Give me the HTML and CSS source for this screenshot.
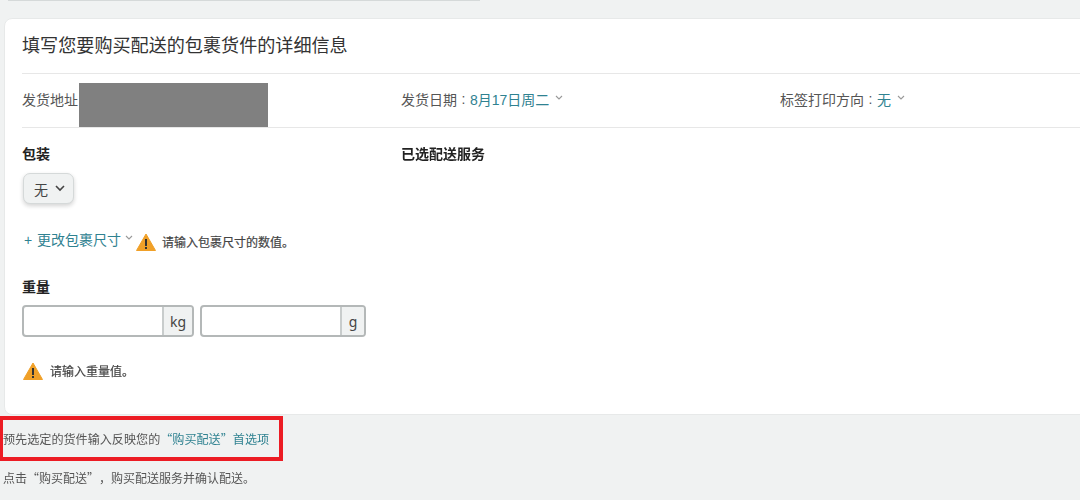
FILE: index.html
```html
<!DOCTYPE html>
<html lang="zh-CN">
<head>
<meta charset="utf-8">
<title>购买配送</title>
<link rel="stylesheet" href="styles.css">
</head>
<body>
<div class="top-strip"></div>
<main class="card">
  <h1 class="title">填写您要购买配送的包裹货件的详细信息</h1>
  <div class="meta">
    <div class="meta-cell">发货地址<span class="redacted"></span></div>
    <div class="meta-cell">发货日期<span class="colon">:</span><a class="link">8月17日周二</a><svg class="chev" viewBox="0 0 8 5"><path d="M1 1l3 3 3-3"/></svg></div>
    <div class="meta-cell">标签打印方向<span class="colon">:</span><a class="link">无</a><svg class="chev" viewBox="0 0 8 5"><path d="M1 1l3 3 3-3"/></svg></div>
  </div>
  <div class="body">
    <section class="left">
      <h2 class="label">包装</h2>
      <button class="select">无<svg class="select-chev" viewBox="0 0 10 7"><path d="M1 1l4 4 4-4"/></svg></button>
      <div class="dims">
        <a class="link dims-link">+ 更改包裹尺寸</a><svg class="chev dims-chev" viewBox="0 0 8 5"><path d="M1 1l3 3 3-3"/></svg>
        <svg class="warn" viewBox="0 0 20 18"><path class="warn-bg" d="M10 1L19.5 17.5H.5z"/><rect class="warn-mark" x="9" y="6" width="2" height="7"/><rect class="warn-mark" x="9" y="14" width="2" height="2"/></svg>
        <span class="warn-text">请输入包裹尺寸的数值。</span>
      </div>
      <h2 class="label weight-label">重量</h2>
      <div class="weights">
        <div class="field field-kg"><input class="input" type="text"><span class="unit">kg</span></div>
        <div class="field field-g"><input class="input" type="text"><span class="unit">g</span></div>
      </div>
      <div class="weight-warn">
        <svg class="warn" viewBox="0 0 20 18"><path class="warn-bg" d="M10 1L19.5 17.5H.5z"/><rect class="warn-mark" x="9" y="6" width="2" height="7"/><rect class="warn-mark" x="9" y="14" width="2" height="2"/></svg>
        <span class="warn-text">请输入重量值。</span>
      </div>
    </section>
    <section class="right">
      <h2 class="label">已选配送服务</h2>
    </section>
  </div>
</main>
<p class="note-box">预先选定的货件输入反映您的<a class="link">“购买配送”首选项</a></p>
<p class="note">点击“购买配送”，购买配送服务并确认配送。</p>
</body>
</html>
```

FILE: styles.css
```css
* { box-sizing: border-box; }
html, body { margin: 0; height: 100%; overflow: hidden; }
body {
  background: #f0f2f2;
  color: #333;
  font-family: "Liberation Sans", "Noto Sans CJK SC", sans-serif;
  font-size: 14px;
  width: 1080px;
  filter: blur(.35px);
}
.top-strip { width: 472px; height: 1px; background: #d5d9d9; margin-left: 8px; }
.card {
  width: 1120px;
  height: 397px;
  margin: 17px 0 0 4px;
  padding: 0 0 0 17px;
  background: #fff;
  border: 1px solid #e7e9e9;
  border-radius: 8px;
}
.title {
  margin: 0;
  height: 55px;
  font-size: 18.1px;
  font-weight: 400;
  line-height: 54px;
  color: #333;
  border-bottom: 1px solid #e7e7e7;
}
.meta {
  display: grid;
  grid-template-columns: 379px 379px 1fr;
  height: 54px;
  border-bottom: 1px solid #e7e7e7;
  font-size: 14px;
  color: #555;
}
.meta-cell { display: flex; align-items: center; height: 53px; padding-bottom: 4px; }
.colon { margin: 0 4.5px; }
.redacted { width: 189px; height: 44px; margin: 13px 0 0 1px; background: #808080; }
.link { color: #2f8291; }
.chev { width: 8px; height: 5px; margin: -3px 0 0 6px; fill: none; stroke: #999; stroke-width: 1.1; }
.body { display: grid; grid-template-columns: 379px 1fr; padding-top: 17px; }
.label { margin: 0; font-size: 14px; line-height: 18px; font-weight: 700; color: #222; }
.select {
  display: flex;
  align-items: center;
  width: 51px;
  height: 31px;
  margin: 10px 0 0 1px;
  padding: 0 0 0 10px;
  border: 1px solid #d5d9d9;
  border-radius: 7px;
  background: #f0f2f2;
  box-shadow: 0 2px 4px rgba(15, 17, 17, .18);
  color: #444;
  font: inherit;
  font-size: 14px;
}
.select-chev { width: 10px; height: 7px; margin-left: 7px; fill: none; stroke: #444; stroke-width: 1.6; }
.dims { display: flex; align-items: center; height: 20px; margin-top: 28px; padding-left: 2px; }
.dims-link { font-size: 14px; line-height: 20px; margin-top: -5px; word-spacing: 1px; }
.dims-chev { margin: -9px 0 0 4px; }
.warn { width: 20px; height: 18px; flex: none; }
.dims .warn { margin-left: 3px; }
.warn-bg { fill: #f0a028; stroke: #f0a028; stroke-linejoin: round; }
.warn-mark { fill: #333; }
.warn-text { margin: -2px 0 0 7px; font-size: 12px; color: #444; -webkit-text-stroke: .2px #444; }
.dims .warn-text { margin-left: 6px; }
.weight-label { margin-top: 26px; }
.weights { display: flex; gap: 6px; margin-top: 9px; }
.field { display: flex; height: 32px; border: 2px solid #b4b8b8; border-radius: 4px; overflow: hidden; background: #fff; }
.field-kg { width: 172px; }
.field-g { width: 166px; }
.input { flex: 1; min-width: 0; border: 0; padding: 0; background: transparent; }
.unit { display: flex; align-items: center; justify-content: center; flex: none; border-left: 2px solid #c8cccc; background: #f0f2f2; color: #444; font-size: 14px; font-family: "Noto Sans", sans-serif; }
.field-kg .unit { width: 30px; }
.field-g .unit { width: 24px; }
.weight-warn { display: flex; align-items: center; height: 20px; margin-top: 24px; padding-left: 1px; }
.note-box {
  width: 283px;
  height: 45px;
  margin: 1px 0 0;
  padding-top: 2px;
  border: 4.5px solid #ec1c24;
  border-left-width: 3px;
  font-family: "Noto Sans CJK SC", sans-serif;
  font-size: 12.1px;
  line-height: 33px;
  color: #555;
  white-space: nowrap;
  text-spacing-trim: space-all;
}
.note { margin: 9px 0 0 3px; font-family: "Noto Sans CJK SC", sans-serif; font-size: 12px; line-height: 16px; color: #555; text-spacing-trim: space-all; }
```
